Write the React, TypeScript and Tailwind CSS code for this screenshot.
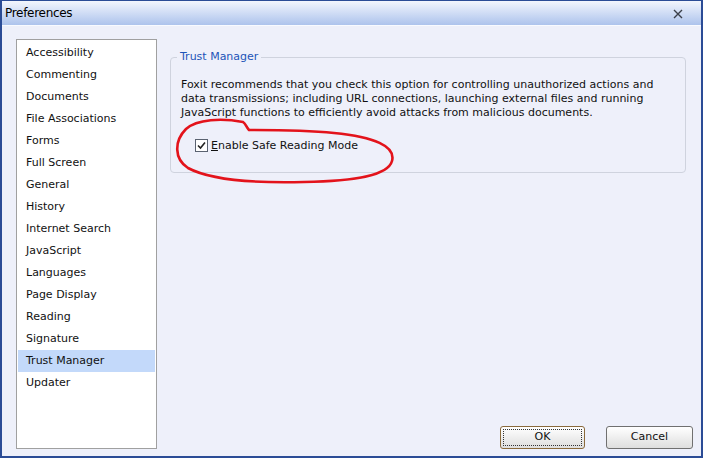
const pages = [
  "Accessibility",
  "Commenting",
  "Documents",
  "File Associations",
  "Forms",
  "Full Screen",
  "General",
  "History",
  "Internet Search",
  "JavaScript",
  "Languages",
  "Page Display",
  "Reading",
  "Signature",
  "Trust Manager",
  "Updater",
];

const App = () => {
  return (
    <div
      className="relative w-[703px] h-[458px] flex flex-col bg-[#eef0fa] border-x-2 border-b-2 border-t border-[#2b4c96] text-[11px] text-[#111]"
      style={{ fontFamily: '"DejaVu Sans", Verdana, sans-serif' }}
    >
      {/* title bar */}
      <div className="h-[25px] shrink-0 flex items-center justify-between pl-[3px] pr-[18px] bg-gradient-to-b from-[#f3f6fd] to-[#adc3ec] border-b border-[#f8faff]">
        <span className="text-[12px] tracking-[-0.3px] text-black">Preferences</span>
        <svg width="10" height="10" viewBox="0 0 10 10" className="mt-[1px]">
          <path d="M1 1 L9 9 M9 1 L1 9" stroke="#3a3f4a" strokeWidth="1.4" />
        </svg>
      </div>

      <div className="flex flex-1 pl-[14px] pt-[13px] pb-[7px] pr-[8px]">
        {/* page list */}
        <div className="w-[141px] shrink-0 bg-white border border-[#a0a0a0] pt-[2px] px-[1px]">
          {pages.map((p) => (
            <div
              key={p}
              className={
                p === "Trust Manager"
                  ? "h-[22px] flex items-center pl-[8px] bg-[#c3d9fa]"
                  : "h-[22px] flex items-center pl-[8px]"
              }
            >
              {p}
            </div>
          ))}
        </div>

        <div className="flex-1 flex flex-col pl-[13px]">
          <fieldset className="mt-[10px] mr-[7px] h-[124px] border border-[#cfd3de] rounded-[4px] px-[10px] pt-[12px]">
            <legend className="-ml-[4px] px-[3px] text-[#1d54b8]">Trust Manager</legend>
            <p className="leading-[14px]">
              Foxit recommends that you check this option for controlling unauthorized actions and data
              transmissions; including URL connections, launching external files and running
              JavaScript functions to efficiently avoid attacks from malicious documents.
            </p>
            <label className="flex items-center mt-[18px] ml-[14px] gap-[3px]">
              <span className="w-[13px] h-[13px] bg-white border border-[#5a6270] flex items-center justify-center">
                <svg width="9" height="9" viewBox="0 0 9 9">
                  <path d="M1 4.5 L3.5 7 L8 1.5" fill="none" stroke="#222" strokeWidth="1.6" />
                </svg>
              </span>
              <span>
                <span className="underline">E</span>nable Safe Reading Mode
              </span>
            </label>
          </fieldset>

          <div className="mt-auto flex justify-end gap-[21px]">
            <button className="w-[85px] h-[23px] rounded-[3px] border border-[#8a6a3c] bg-gradient-to-b from-[#ffffff] to-[#dedede] p-[2px]">
              <span className="w-full h-full flex items-center justify-center border border-dotted border-[#333]">
                OK
              </span>
            </button>
            <button className="w-[87px] h-[23px] rounded-[3px] border border-[#707070] bg-gradient-to-b from-[#ffffff] to-[#dedede] flex items-center justify-center">
              Cancel
            </button>
          </div>
        </div>
      </div>

      {/* red pen circle drawn over the dialog */}
      <svg className="absolute left-0 top-0 pointer-events-none" width="703" height="458">
        <path
          d="M247 129 C244 126 244 123 241 121 C220 117 195 118 184 128 C172 140 172 158 186 167 C212 181 262 182 302 181 C352 180 386 175 390 160 C394 145 372 136 332 132 C302 129 272 129 247 129"
          fill="none"
          stroke="#e3131b"
          strokeWidth="2.6"
          strokeLinecap="round"
        />
      </svg>
    </div>
  );
};

export default App;
